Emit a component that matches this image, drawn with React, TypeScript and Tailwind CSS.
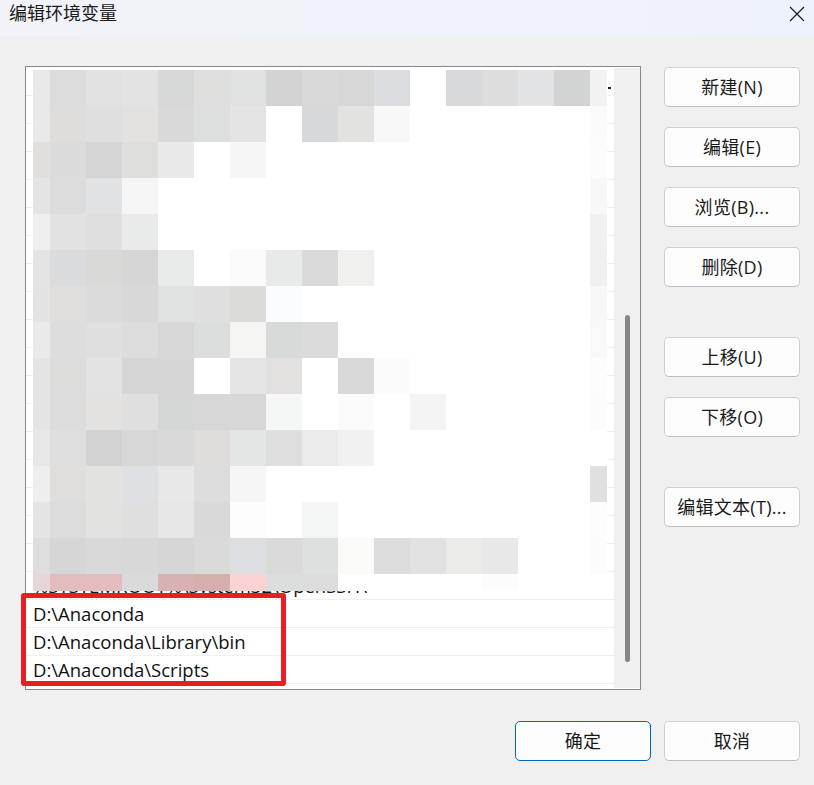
const CJK = 'font-["Segoe_UI","Open_Sans","Noto_Sans_CJK_SC",sans-serif]'

// blurred-out path entries, one row per line, 17 columns
const mosaic = [
  ['e9e9e9', 'dcdcdc', 'e1e1e1', 'e3e3e3', 'd6d8d7', 'dededc', 'e0e2e1', 'd3d3d3', 'd9d9d9', 'd7d7d7', 'dcdde0', 'ffffff', 'd8d9db', 'dddddd', 'e2e3e5', 'd2d4d3', 'f2f2f2'],
  ['e9e9e9', 'dedddb', 'dfdfdf', 'e2e1df', 'd9d9d9', 'dddfde', 'e4e4e4', 'ffffff', 'd7d8da', 'e2e2e0', 'f8f8f8', 'ffffff', 'ffffff', 'ffffff', 'ffffff', 'ffffff', 'fbfbfb'],
  ['e0dfdd', 'dbdbdb', 'd5d5d5', 'dededc', 'e9e9e9', 'ffffff', 'f6f6f6', 'ffffff', 'ffffff', 'ffffff', 'ffffff', 'ffffff', 'ffffff', 'ffffff', 'ffffff', 'ffffff', 'fcfcfc'],
  ['e4e4e4', 'dcdcdc', 'e1e2e4', 'f5f5f5', 'ffffff', 'ffffff', 'ffffff', 'ffffff', 'ffffff', 'ffffff', 'ffffff', 'ffffff', 'ffffff', 'ffffff', 'ffffff', 'ffffff', 'f8f8f8'],
  ['efefef', 'e2e2e2', 'dfdfdf', 'e9ebea', 'ffffff', 'ffffff', 'ffffff', 'ffffff', 'ffffff', 'ffffff', 'ffffff', 'ffffff', 'ffffff', 'ffffff', 'ffffff', 'ffffff', 'f1f1f1'],
  ['e4e4e4', 'dadbdd', 'd9d9d7', 'd6d6d6', 'e9ebea', 'ffffff', 'fafafa', 'e8eae9', 'dadada', 'f0f0ee', 'ffffff', 'ffffff', 'ffffff', 'ffffff', 'ffffff', 'ffffff', 'f0f0f0'],
  ['e3e3e3', 'dfdedc', 'dbdbdb', 'd8d8d8', 'e0e2e1', 'dfdfdf', 'dbdbd9', 'fbfcfe', 'ffffff', 'ffffff', 'ffffff', 'ffffff', 'ffffff', 'ffffff', 'ffffff', 'ffffff', 'f8f8f8'],
  ['eaeaea', 'dddddd', 'dfdfdf', 'dcdcdc', 'd7d7d7', 'dcdedd', 'f5f5f3', 'd8dad9', 'dbdbdb', 'ffffff', 'ffffff', 'ffffff', 'ffffff', 'ffffff', 'ffffff', 'ffffff', 'f9f9f9'],
  ['e4e4e4', 'dcdcda', 'e3e3e3', 'd6d6d6', 'd6d6d6', 'ffffff', 'e5e5e5', 'e2e1df', 'ffffff', 'd9d9d9', 'fbfbfb', 'ffffff', 'ffffff', 'ffffff', 'ffffff', 'ffffff', 'fdfdfd'],
  ['e4e4e4', 'dcdcdc', 'e3e2e0', 'dfdfdf', 'd5d7d6', 'd7d7d7', 'd7d7d7', 'f5f7f6', 'ffffff', 'fbfbfb', 'ffffff', 'f4f4f4', 'ffffff', 'ffffff', 'ffffff', 'ffffff', 'fcfcfc'],
  ['e7e7e7', 'dedede', 'd2d2d2', 'd7d7d7', 'd9d9d9', 'dfdddc', 'e4e6e5', 'dedede', 'ebebeb', 'f1f1f1', 'ffffff', 'ffffff', 'ffffff', 'ffffff', 'ffffff', 'ffffff', 'ffffff'],
  ['eeeeee', 'dfdedc', 'e2e2e0', 'dfe0e4', 'e8e8e8', 'dddddd', 'f6f6f6', 'ffffff', 'ffffff', 'ffffff', 'ffffff', 'ffffff', 'ffffff', 'ffffff', 'ffffff', 'ffffff', 'e0e0e0'],
  ['e4e4e4', 'dcdcdc', 'e2e2e0', 'dfdfdf', 'e6e6e6', 'd9d9d9', 'fdfdfd', 'ffffff', 'f4f6f5', 'ffffff', 'ffffff', 'ffffff', 'ffffff', 'ffffff', 'ffffff', 'ffffff', 'fdfdfd'],
  ['dedede', 'd6d6d6', 'd9d9d9', 'd8d8d8', 'd6d6d6', 'dadada', 'dddee2', 'dadada', 'dee0df', 'fafaf8', 'dcdcdc', 'e1e1e1', 'ebebe9', 'e8e8e8', 'ffffff', 'ffffff', 'fcfcfc'],
  ['e6d6d8', 'e3bcbd', 'e3bcbd', 'dadada', 'd8b2b2', 'd5aeae', 'fbd3d4', 'dcdddd', 'dcdcdc', 'ffffff', 'ffffff', 'ffffff', 'ffffff', 'fcfcfc', 'ffffff', 'ffffff', 'ffffff'],
]

const rows: string[] = Array(18).fill('').concat([
  '%SYSTEMROOT%\\System32\\OpenSSH\\',
  'D:\\Anaconda',
  'D:\\Anaconda\\Library\\bin',
  'D:\\Anaconda\\Scripts',
])

function Mosaic() {
  return (
    <svg className="absolute left-[7px] top-[3px]" width="574" height="521" viewBox="0 0 574 521" shapeRendering="crispEdges">
      {mosaic.map((row, r) =>
        row.map((c, i) => (
          <rect
            key={`${r}-${i}`}
            x={i === 0 ? 0 : 17 + (i - 1) * 36}
            y={r * 36}
            width={i === 0 ? 17 : i === 16 ? 17 : 36}
            height={r === 14 ? 17 : 36}
            fill={`#${c}`}
          />
        )),
      )}
    </svg>
  )
}

function Btn({ label, primary = false }: { label: string; primary?: boolean }) {
  return (
    <button
      className={`h-10 w-[136px] rounded-[5px] border bg-[#fdfdfd] text-[18px] leading-none tracking-[0.3px] text-[#1a1a1a] ${
        primary ? 'border-[#0067c0]' : 'border-[#d0d0d0] border-b-[#bdbdbd]'
      }`}
    >
      {label}
    </button>
  )
}

export default function App() {
  return (
    <div className={`flex h-[785px] w-[814px] flex-col overflow-hidden bg-[#f0f0f0] ${CJK}`}>
      <div className="flex h-9 shrink-0 items-start justify-between bg-gradient-to-r from-[#f2f3f8] to-[#eef2fc] pl-[9px] pr-[9px]">
        <span className="mt-[2px] text-[18px] leading-[23px] text-[#1a1a1a]">编辑环境变量</span>
        <svg className="mt-[6px]" width="16" height="16" viewBox="0 0 16 16" fill="none" stroke="#1a1a1a" strokeWidth="1.2">
          <path d="M1 1l14 14M15 1L1 15" />
        </svg>
      </div>

      <div className="flex gap-[23px] pl-[25px] pt-[30px]">
        <div className="relative flex h-[624px] w-[616px] shrink-0 border border-[#868a8e] bg-white py-px">
          <div className="h-[616px] flex-1">
            {rows.map((text, i) => (
              <div key={i} className="flex h-7 items-center border-b border-[#f0f0f0] pl-[7px] pt-[2px] text-[18.5px] leading-none text-[#111]">
                {text}
              </div>
            ))}
          </div>
          <div className="flex h-[620px] w-[26px] shrink-0 justify-center bg-[#f0f0f0] pt-[247px] pl-px">
            <div className="h-[347px] w-[5px] rounded-full bg-[#868686]" />
          </div>
          <Mosaic />
          <div className="absolute left-[582px] top-[20px] h-[2px] w-[3px] bg-[#222]" />
          <div className="absolute -left-[5px] top-[526px] h-[93px] w-[265px] rounded-[3px] border-[5px] border-[#ed1c24]" />
        </div>

        <div className="flex flex-col gap-[50px] pt-px">
          <div className="flex flex-col gap-5">
            <Btn label="新建(N)" />
            <Btn label="编辑(E)" />
            <Btn label="浏览(B)..." />
            <Btn label="删除(D)" />
          </div>
          <div className="flex flex-col gap-5">
            <Btn label="上移(U)" />
            <Btn label="下移(O)" />
          </div>
          <Btn label="编辑文本(T)..." />
        </div>
      </div>

      <div className="mt-[31px] flex justify-end gap-[13px] pr-[14px]">
        <Btn label="确定" primary />
        <Btn label="取消" />
      </div>
    </div>
  )
}
